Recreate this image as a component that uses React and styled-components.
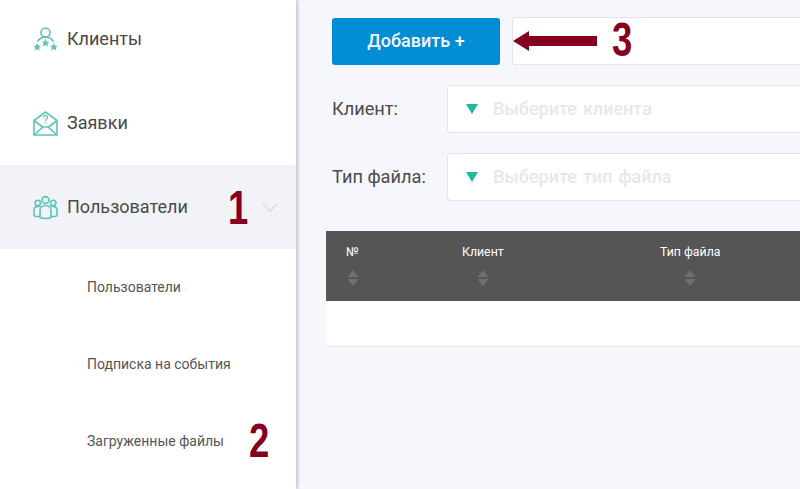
import React from "react";
import styled, { createGlobalStyle } from "styled-components";

const Global = createGlobalStyle`
  html, body { margin: 0; padding: 0; height: 100%; overflow: hidden; background: #f6f7fc; }
  #root { height: 100%; }
  * { box-sizing: border-box; }
`;

const Page = styled.div`
  display: flex;
  width: 800px;
  height: 489px;
  overflow: hidden;
  font-family: Roboto, "Liberation Sans", sans-serif;
  color: #4a4a4a;
`;

const Sidebar = styled.aside`
  position: relative;
  flex: 0 0 296px;
  background: #fff;
  box-shadow: 2px 0 3px rgba(60, 60, 80, 0.25);
`;

const Nav = styled.nav`
  margin-top: -3px;
`;

const NavRow = styled.div`
  display: flex;
  align-items: center;
  gap: 9px;
  height: 84px;
  padding: 0 18px 0 33px;
  font-size: 18px;
  background: ${(p) => (p.$active ? "#f2f3f8" : "transparent")};
`;

const NavLabel = styled.span`
  flex: 1;
  padding-bottom: 2px;
`;

const SubRow = styled.div`
  display: flex;
  align-items: center;
  height: 77px;
  padding: 0 0 2px 87px;
  font-size: 14px;
  color: #555;
`;

const Mark = styled.span`
  position: absolute;
  left: ${(p) => p.$x}px;
  top: ${(p) => p.$y}px;
  font-family: "Liberation Sans", Arial, sans-serif;
  font-weight: 700;
  font-size: 48px;
  line-height: 48px;
  color: #85001f;
  transform: scaleX(0.76);
  transform-origin: left top;
`;

const Main = styled.main`
  position: relative;
  flex: 1;
  min-width: 0;
  padding: 17px 0 0 30px;
`;

const Toolbar = styled.div`
  display: flex;
  gap: 12px;
  margin: 0 0 20px 6px;
`;

const AddButton = styled.button`
  flex: 0 0 168px;
  height: 47px;
  margin-top: 1px;
  padding: 0 0 2px;
  border: 0;
  border-radius: 3px;
  background: #008dd6;
  color: #f4f9fd;
  font-family: inherit;
  font-size: 18px;
  font-weight: 500;
`;

const Box = styled.div`
  display: flex;
  align-items: center;
  flex: 1;
  height: 48px;
  background: #fff;
  border: 1px solid #e3e4ec;
  border-right: 0;
  border-radius: 4px 0 0 4px;
`;

const FilterRow = styled.div`
  display: flex;
  align-items: center;
  margin: 0 0 20px 6px;
`;

const FilterLabel = styled.label`
  flex: 0 0 115px;
  padding-bottom: 2px;
  font-size: 18.200px;
  color: #4a4a4a;
`;

const Caret = styled.span`
  width: 0;
  height: 0;
  margin: 0 15px 0 18px;
  border-left: 6px solid transparent;
  border-right: 6px solid transparent;
  border-top: 10px solid #1fbc9c;
`;

const Placeholder = styled.span`
  padding-bottom: 2px;
  font-size: 18px;
  font-weight: 500;
  word-spacing: 1.500px;
  color: #e6e7ef;
`;

const Table = styled.div`
  margin: 30px 0 0;
`;

const HeadRow = styled.div`
  display: grid;
  grid-template-columns: 116px 198px 1fr;
  height: 70px;
  padding: 14px 0 0 20px;
  background: #555;
`;

const HeadCell = styled.div`
  color: #fff;
  font-size: 12.300px;
  line-height: 14px;
`;

const SortIcon = styled.svg`
  display: block;
  width: 12px;
  height: 16px;
  margin: 11px 0 0 ${(p) => p.$offset}px;
`;

const BodyRow = styled.div`
  height: 46px;
  background: #fff;
  border-bottom: 1px solid #e2e3e6;
`;

const Arrow = styled.svg`
  position: absolute;
  left: 217px;
  top: 31px;
  width: 84px;
  height: 20px;
`;

const Icon = styled.svg`
  flex: 0 0 25px;
  width: 25px;
  height: 25px;
  fill: none;
  stroke: #5cc4b8;
  stroke-width: 1.6;
`;

const Star = ({ x, y }) => (
  <path
    transform={`translate(${x} ${y}) scale(0.42)`}
    d="M0-10 2.900-3.100 9.500-3.100 4.700 1.200 5.900 8.100 0 4.500-5.900 8.100-4.700 1.200-9.500-3.100-2.900-3.100Z"
    fill="#5cc4b8"
    stroke="none"
  />
);

const ClientsIcon = () => (
  <Icon viewBox="0 0 25 25">
    <circle cx="12.500" cy="5.500" r="4.500" />
    <path d="M4.500 14.500c1.500-2.500 4.500-4.400 8-4.400s6.500 1.900 8 4.400" />
    <Star x={12.500} y={16} />
    <Star x={4.200} y={20} />
    <Star x={20.800} y={20} />
  </Icon>
);

const MailIcon = () => (
  <Icon viewBox="0 0 25 25">
    <path d="M1 9.500 12.500 1 24 9.500V24H1Z" />
    <path d="M1 9.500 9.500 16M24 9.500 15.500 16M1 24l9-8h5l9 8" />
    <path d="M10.500 6.500c0-2.600 4-2.600 4 0 0 1.600-2 1.600-2 3.400M12.500 11.300v1" strokeWidth="1.200" />
  </Icon>
);

const UsersIcon = () => (
  <Icon viewBox="0 0 25 25">
    <circle cx="12.500" cy="5" r="3.400" />
    <circle cx="4.800" cy="8" r="2.700" />
    <circle cx="20.200" cy="8" r="2.700" />
    <path d="M7 22.500v-7c0-3 2.400-5 5.500-5s5.500 2 5.500 5v7c-2.500 1.400-8.500 1.400-11 0Z" />
    <path d="M7 21.500H3c-1.300 0-2-.8-2-2v-4.500c0-2 1.500-3.500 4-3.500h2.500" />
    <path d="M18 21.500h4c1.300 0 2-.8 2-2v-4.500c0-2-1.500-3.500-4-3.500h-2.500" />
  </Icon>
);

const Chevron = () => (
  <svg width="16" height="9" viewBox="0 0 16 9" fill="none" stroke="#d3d5e0" strokeWidth="1.200">
    <path d="M1 1l7 7 7-7" />
  </svg>
);

const Sort = ({ offset }) => (
  <SortIcon $offset={offset} viewBox="0 0 12 16">
    <path d="M6 0 11.500 7H.5Z M.5 9H11.500L6 16Z" fill="#707070" />
  </SortIcon>
);

const filters = [
  { label: "Клиент:", placeholder: "Выберите клиента" },
  { label: "Тип файла:", placeholder: "Выберите тип файла" },
];

const columns = [
  { title: "№", offset: 1 },
  { title: "Клиент", offset: 15 },
  { title: "Тип файла", offset: 24 },
];

export default function App() {
  return (
    <Page>
      <Global />
      <Sidebar>
        <Nav>
          <NavRow>
            <ClientsIcon />
            <NavLabel>Клиенты</NavLabel>
          </NavRow>
          <NavRow>
            <MailIcon />
            <NavLabel>Заявки</NavLabel>
          </NavRow>
          <NavRow $active>
            <UsersIcon />
            <NavLabel>Пользователи</NavLabel>
            <Chevron />
          </NavRow>
          <SubRow>Пользователи</SubRow>
          <SubRow>Подписка на события</SubRow>
          <SubRow>Загруженные файлы</SubRow>
        </Nav>
        <Mark $x={228} $y={184}>1</Mark>
        <Mark $x={249} $y={417}>2</Mark>
      </Sidebar>
      <Main>
        <Toolbar>
          <AddButton>Добавить +</AddButton>
          <Box />
        </Toolbar>
        {filters.map((f) => (
          <FilterRow key={f.label}>
            <FilterLabel>{f.label}</FilterLabel>
            <Box>
              <Caret />
              <Placeholder>{f.placeholder}</Placeholder>
            </Box>
          </FilterRow>
        ))}
        <Table>
          <HeadRow>
            {columns.map((c) => (
              <HeadCell key={c.title}>
                {c.title}
                <Sort offset={c.offset} />
              </HeadCell>
            ))}
          </HeadRow>
          <BodyRow />
        </Table>
        <Arrow viewBox="0 0 84 20">
          <path d="M0 10 16 0V5H84V15H16V20Z" fill="#85001f" />
        </Arrow>
        <Mark $x={316} $y={16}>3</Mark>
      </Main>
    </Page>
  );
}
